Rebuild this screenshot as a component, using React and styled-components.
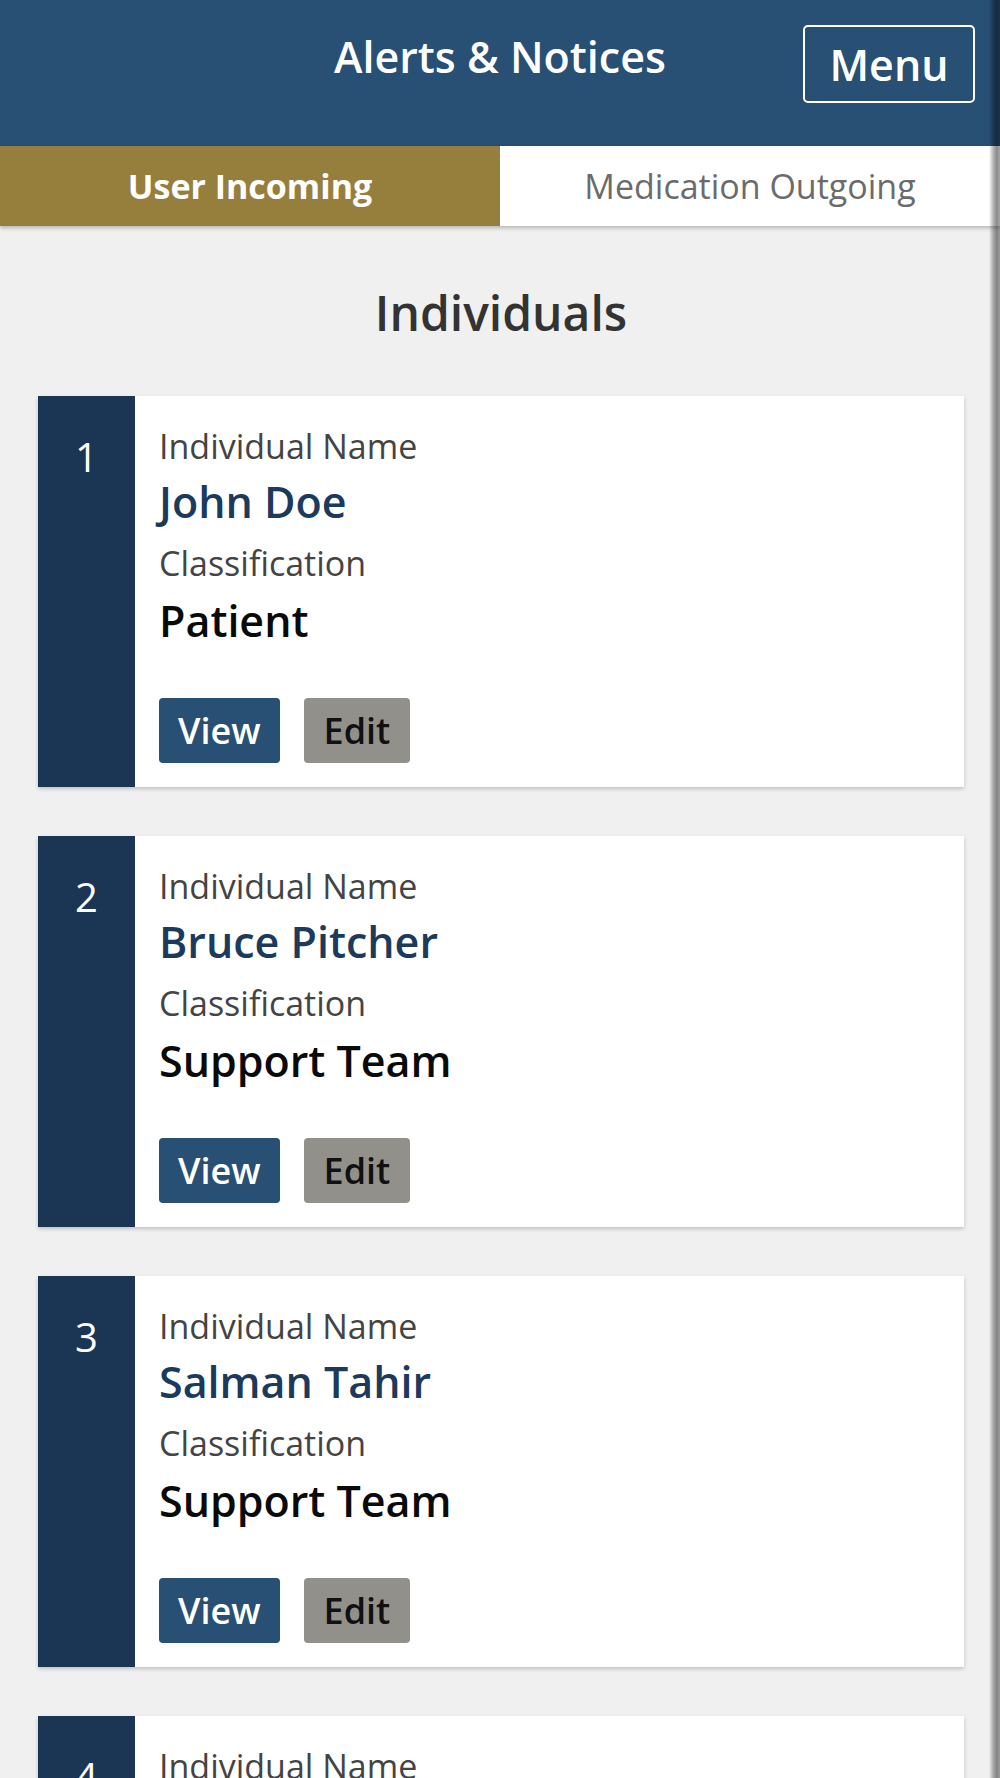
import React from 'react';
import styled, { createGlobalStyle } from 'styled-components';

const people = [
    { id: 1, name: 'John Doe', classification: 'Patient' },
    { id: 2, name: 'Bruce Pitcher', classification: 'Support Team' },
    { id: 3, name: 'Salman Tahir', classification: 'Support Team' },
    { id: 4, name: 'Mary Collins', classification: 'Patient' },
];

function App() {
    return (
        <>
            <GlobalStyle />
            <Page>
                <Header>
                    <span />
                    <Title>Alerts &amp; Notices</Title>
                    <MenuButton>Menu</MenuButton>
                </Header>
                <Tabs>
                    <Tab active>User Incoming</Tab>
                    <Tab>Medication Outgoing</Tab>
                </Tabs>
                <Content>
                    <Heading>Individuals</Heading>
                    {people.map(p => (
                        <Card key={p.id}>
                            <NumberCol>{p.id}</NumberCol>
                            <CardBody>
                                <Label>Individual Name</Label>
                                <Name>{p.name}</Name>
                                <Label second>Classification</Label>
                                <Value>{p.classification}</Value>
                                <Actions>
                                    <Button variant="view">View</Button>
                                    <Button variant="edit">Edit</Button>
                                </Actions>
                            </CardBody>
                        </Card>
                    ))}
                </Content>
                <ScrollShade />
            </Page>
        </>
    );
}

export default App;

const GlobalStyle = createGlobalStyle`
    html, body {
        margin: 0;
        padding: 0;
        overflow: hidden;
        background: #f0f0f0;
        font-family: "Open Sans", "Noto Sans", sans-serif;
    }
    * {
        box-sizing: border-box;
    }
`;

const Page = styled.div`
    width: 1000px;
    min-height: 1778px;
    background: #f0f0f0;
`;

const Header = styled.header`
    display: grid;
    grid-template-columns: 1fr auto 1fr;
    align-items: flex-start;
    height: 146px;
    padding: 25px 25px 0;
    background: #284f74;
    color: #fff;
`;

const Title = styled.h1`
    margin: 6px 0 0;
    font-size: 43px;
    line-height: 52px;
    font-weight: 600;
`;

const MenuButton = styled.button`
    justify-self: end;
    display: flex;
    align-items: center;
    justify-content: center;
    width: 172px;
    height: 78px;
    padding: 0;
    border: 2px solid #fff;
    border-radius: 5px;
    background: transparent;
    color: #fff;
    font-family: inherit;
    font-size: 43px;
    line-height: 43px;
    font-weight: 600;
`;

const Tabs = styled.nav`
    display: grid;
    grid-template-columns: 1fr 1fr;
    height: 80px;
    box-shadow: 0 2px 4px rgba(0, 0, 0, 0.25);
    position: relative;
`;

const Tab = styled.div`
    display: flex;
    align-items: center;
    justify-content: center;
    font-size: 34px;
    font-weight: ${p => (p.active ? 700 : 400)};
    background: ${p => (p.active ? '#967f3c' : '#fff')};
    color: ${p => (p.active ? '#fff' : '#6b6b6b')};
`;

const Content = styled.main`
    padding: 0 36px 0 38px;
`;

const Heading = styled.h2`
    margin: 59px 0 55px;
    text-align: center;
    font-size: 48px;
    line-height: 56px;
    font-weight: 600;
    color: #333;
`;

const Card = styled.section`
    display: flex;
    min-height: 391px;
    margin-bottom: 49px;
    background: #fff;
    box-shadow: 0 2px 4px rgba(0, 0, 0, 0.2);
`;

const NumberCol = styled.div`
    flex: 0 0 97px;
    padding-top: 38px;
    text-align: center;
    background: #1b3654;
    color: #fff;
    font-size: 40px;
    line-height: 46px;
`;

const CardBody = styled.div`
    flex: 1;
    padding: 30px 24px 24px 24px;
`;

const Label = styled.div`
    margin-top: ${p => (p.second ? '16px' : '0')};
    font-size: 34px;
    line-height: 41px;
    color: #444;
`;

const Name = styled.div`
    margin-top: 10px;
    font-size: 43px;
    line-height: 50px;
    font-weight: 600;
    color: #1b3a5c;
`;

const Value = styled.div`
    margin-top: 12px;
    font-size: 43px;
    line-height: 50px;
    font-weight: 600;
    color: #0a0a0a;
`;

const Actions = styled.div`
    display: flex;
    gap: 24px;
    margin-top: 52px;
`;

const Button = styled.button`
    height: 65px;
    padding: 0 ${p => (p.variant === 'view' ? '19px' : '20px')};
    border: none;
    border-radius: 4px;
    font-family: inherit;
    font-size: 36px;
    font-weight: 600;
    background: ${p => (p.variant === 'view' ? '#284f74' : '#91908b')};
    color: ${p => (p.variant === 'view' ? '#fff' : '#111')};
`;

const ScrollShade = styled.div`
    position: fixed;
    top: 0;
    right: 0;
    bottom: 0;
    width: 11px;
    background: linear-gradient(
        to right,
        rgba(0, 0, 0, 0) 0%,
        rgba(0, 0, 0, 0.3) 40%,
        rgba(0, 0, 0, 0.45) 70%,
        rgba(0, 0, 0, 0.35) 100%
    );
    pointer-events: none;
`;
